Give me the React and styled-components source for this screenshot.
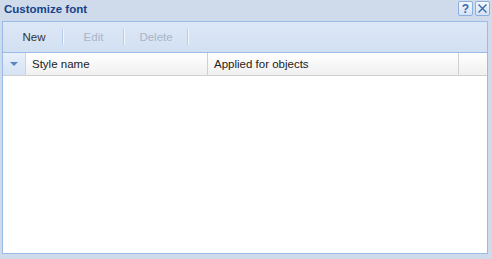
import React from "react";
import styled, { createGlobalStyle } from "styled-components";

const GlobalStyle = createGlobalStyle`
  html, body {
    margin: 0;
    padding: 0;
    background: #cfdbeb;
  }
  body {
    font-family: "Liberation Sans", Arial, sans-serif;
    font-size: 11px;
  }
`;

const Window = styled.div`
  width: 492px;
  height: 259px;
  box-sizing: border-box;
  background: #cfdbea;
  padding: 0 4px 5px 2px;
  display: flex;
  flex-direction: column;
`;

const TitleBar = styled.div`
  height: 21px;
  display: flex;
  align-items: center;
  justify-content: space-between;
  padding-left: 2px;
`;

const Title = styled.span`
  font-weight: bold;
  font-size: 11.5px;
  color: #15428b;
  position: relative;
  top: -2px;
`;

const Tools = styled.div`
  display: flex;
  gap: 2px;
  position: relative;
  top: -2px;
  right: -2px;
`;

const ToolBtn = styled.div`
  width: 15px;
  height: 15px;
  box-sizing: border-box;
  border: 1px solid #8daee0;
  border-radius: 2px;
  background: linear-gradient(#f4f8fd, #d4e2f4);
  display: flex;
  align-items: center;
  justify-content: center;
  color: #3b69ad;
  font-weight: bold;
  font-size: 12px;
  line-height: 1;
`;

const Panel = styled.div`
  flex: 1;
  border: 1px solid #99bbe8;
  display: flex;
  flex-direction: column;
  background: #fff;
`;

const Toolbar = styled.div`
  height: 31px;
  box-sizing: border-box;
  background: linear-gradient(#dde8f6, #d2e0f2);
  border-bottom: 1px solid #99bbe8;
  display: flex;
  align-items: center;
  padding-left: 3px;
`;

const TbButton = styled.div`
  font-size: 11.5px;
  color: ${(p) => (p.disabled ? "#a8b5c6" : "#333")};
  width: ${(p) => p.w}px;
  text-align: center;
  box-sizing: border-box;
`;

const Sep = styled.div`
  width: 1px;
  height: 16px;
  background: #b7cde9;
  border-right: 1px solid #f0f5fc;
`;

const Header = styled.div`
  height: 22px;
  display: flex;
  background: linear-gradient(#ffffff, #f0f0f0);
  border-bottom: 1px solid #d0d0d0;
`;

const CheckCol = styled.div`
  width: 22px;
  background: linear-gradient(#e7effa, #d6e3f4);
  border-right: 1px solid #c5d6ee;
  display: flex;
  align-items: center;
  justify-content: center;
`;

const HeadCell = styled.div`
  width: ${(p) => p.w}px;
  flex: ${(p) => (p.grow ? 1 : "none")};
  border-right: 1px solid ${(p) => (p.last ? "transparent" : "#d0d0d0")};
  display: flex;
  align-items: center;
  padding-left: 6px;
  box-sizing: border-box;
  font-size: 11.5px;
  color: #222;
`;

const Body = styled.div`
  flex: 1;
  background: #fff;
`;

export default function App() {
  return (
    <>
      <GlobalStyle />
      <Window>
        <TitleBar>
          <Title>Customize font</Title>
          <Tools>
            <ToolBtn>?</ToolBtn>
            <ToolBtn>
              <svg width="11" height="11" viewBox="0 0 11 11">
                <path d="M1.5 1.5L9.5 9.5M9.5 1.5L1.5 9.5" stroke="#3b69ad" strokeWidth="1.4" />
              </svg>
            </ToolBtn>
          </Tools>
        </TitleBar>
        <Panel>
          <Toolbar>
            <TbButton w={56}>New</TbButton>
            <Sep />
            <TbButton w={59} disabled>Edit</TbButton>
            <Sep />
            <TbButton w={62} disabled>Delete</TbButton>
            <Sep />
          </Toolbar>
          <Header>
            <CheckCol>
              <svg width="8" height="5" viewBox="0 0 8 5">
                <path d="M0 0H8L4 4Z" fill="#5a84c4" />
              </svg>
            </CheckCol>
            <HeadCell w={182}>Style name</HeadCell>
            <HeadCell w={251}>Applied for objects</HeadCell>
            <HeadCell grow last />
          </Header>
          <Body />
        </Panel>
      </Window>
    </>
  );
}
